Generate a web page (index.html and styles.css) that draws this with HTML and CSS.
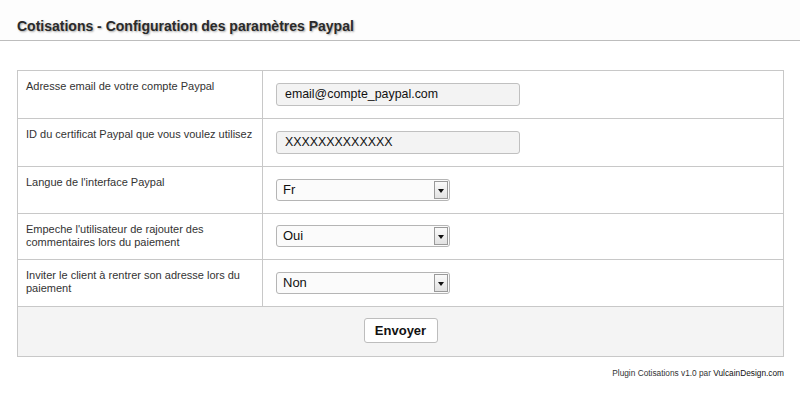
FILE: index.html
```html
<!DOCTYPE html>
<html lang="fr">
<head>
<meta charset="utf-8">
<title>Cotisations - Configuration des paramètres Paypal</title>
<link rel="stylesheet" href="styles.css">
</head>
<body>
<div class="header">
  <h1 class="title">Cotisations - Configuration des paramètres Paypal</h1>
</div>
<form class="panel">
  <div class="row r1">
    <div class="label">Adresse email de votre compte Paypal</div>
    <div class="field"><div class="input">email@compte_paypal.com</div></div>
  </div>
  <div class="row r2">
    <div class="label">ID du certificat Paypal que vous voulez utilisez</div>
    <div class="field"><div class="input">XXXXXXXXXXXXX</div></div>
  </div>
  <div class="row r3">
    <div class="label">Langue de l'interface Paypal</div>
    <div class="field"><div class="select">Fr<span class="arrow"></span></div></div>
  </div>
  <div class="row r4">
    <div class="label">Empeche l'utilisateur de rajouter des commentaires lors du paiement</div>
    <div class="field"><div class="select">Oui<span class="arrow"></span></div></div>
  </div>
  <div class="row r5">
    <div class="label">Inviter le client à rentrer son adresse lors du paiement</div>
    <div class="field"><div class="select">Non<span class="arrow"></span></div></div>
  </div>
  <div class="submit-row">
    <button type="button" class="button">Envoyer</button>
  </div>
</form>
<div class="footer">Plugin Cotisations v1.0 par <span class="brand">VulcainDesign.com</span></div>
</body>
</html>
```

FILE: styles.css
```css
html, body {
  margin: 0;
  padding: 0;
  background: #ffffff;
  font-family: "Liberation Sans", Arial, sans-serif;
  color: #222;
}

.header {
  height: 41px;
  border-bottom: 1px solid #bdbdbd;
  background: #fdfdfd;
  box-sizing: border-box;
  padding: 18px 0 0 17px;
}

.title {
  margin: 0;
  font-size: 14px;
  line-height: 16px;
  font-weight: bold;
  color: #2a2a2a;
  text-shadow: 1px 1px 2px rgba(0,0,0,0.35);
}

.panel {
  margin: 29px 0 0 17px;
  width: 767px;
  border: 1px solid #c8c8c8;
  box-sizing: border-box;
  display: flex;
  flex-direction: column;
}

.row {
  display: grid;
  grid-template-columns: 245px 1fr;
  border-bottom: 1px solid #c8c8c8;
  height: 48px;
  box-sizing: border-box;
}
.r3 { height: 47px; }
.r4 { height: 46px; }
.r5 { height: 47px; }

.label {
  border-right: 1px solid #c8c8c8;
  padding: 9px 8px 0 8px;
  font-size: 11px;
  line-height: 13px;
  color: #333;
}

.field {
  padding: 12px 0 0 13px;
}
.r3 .field { padding-top: 12px; }
.r4 .field { padding-top: 11px; }
.r5 .field { padding-top: 12px; }

.input {
  width: 244px;
  height: 23px;
  box-sizing: border-box;
  border: 1px solid #c0c0c0;
  border-radius: 3px;
  background: #f3f3f3;
  padding: 0 8px;
  font-size: 12.4px;
  line-height: 21px;
  color: #111;
}

.select {
  position: relative;
  width: 174px;
  height: 22px;
  box-sizing: border-box;
  border: 1px solid #b5b5b5;
  border-radius: 3px;
  background: #fbfbfb;
  padding: 0 6px;
  font-size: 13px;
  line-height: 20px;
  color: #111;
}

.arrow {
  position: absolute;
  right: 1px;
  top: 1px;
  width: 14px;
  height: 18px;
  box-sizing: border-box;
  border: 1px solid #9a9a9a;
  background: linear-gradient(#fafafa, #e2e2e2);
}
.arrow::after {
  content: "";
  position: absolute;
  left: 3px;
  top: 7px;
  border-left: 3px solid transparent;
  border-right: 3px solid transparent;
  border-top: 4px solid #111;
}

.submit-row {
  height: 49px;
  background: #f4f4f4;
  display: flex;
  justify-content: center;
  align-items: flex-start;
  padding-top: 11px;
  box-sizing: border-box;
}

.button {
  width: 74px;
  height: 25px;
  border: 1px solid #bdbdbd;
  border-radius: 3px;
  background: #fff;
  font-family: "Liberation Sans", Arial, sans-serif;
  font-size: 13px;
  font-weight: bold;
  color: #111;
  padding: 0;
}

.footer {
  width: 784px;
  text-align: right;
  font-size: 8.3px;
  line-height: 11px;
  color: #333;
  padding-top: 11px;
}
.brand {
  color: #111;
}
```
